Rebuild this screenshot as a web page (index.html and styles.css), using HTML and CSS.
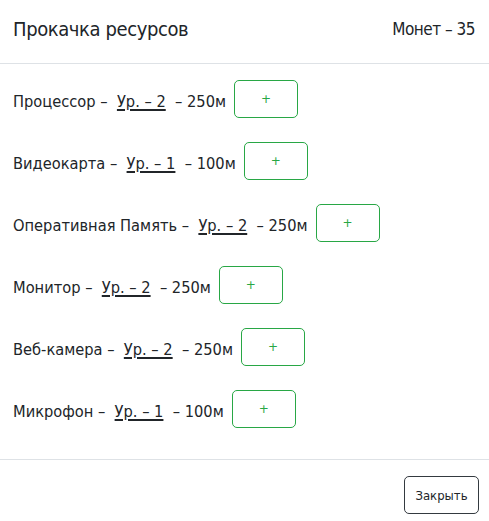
FILE: index.html
```html
<!DOCTYPE html>
<html lang="ru">
<head>
<meta charset="utf-8">
<link rel="stylesheet" href="styles.css">
</head>
<body>
<div class="modal">
  <div class="modal-header">
    <h5 class="title">Прокачка ресурсов</h5>
    <span class="coins">Монет – 35</span>
  </div>
  <div class="modal-body">
    <div class="row"><span>Процессор –&nbsp; <u>Ур. – 2</u> &nbsp;– 250м</span><button class="btn-plus">+</button></div>
    <div class="row"><span>Видеокарта –&nbsp; <u>Ур. – 1</u> &nbsp;– 100м</span><button class="btn-plus">+</button></div>
    <div class="row"><span>Оперативная Память –&nbsp; <u>Ур. – 2</u> &nbsp;– 250м</span><button class="btn-plus">+</button></div>
    <div class="row"><span>Монитор –&nbsp; <u>Ур. – 2</u> &nbsp;– 250м</span><button class="btn-plus">+</button></div>
    <div class="row"><span>Веб-камера –&nbsp; <u>Ур. – 2</u> &nbsp;– 250м</span><button class="btn-plus">+</button></div>
    <div class="row"><span>Микрофон –&nbsp; <u>Ур. – 1</u> &nbsp;– 100м</span><button class="btn-plus">+</button></div>
  </div>
  <div class="modal-footer">
    <button class="btn-close">Закрыть</button>
  </div>
</div>
</body>
</html>
```
FILE: styles.css
```css
* { box-sizing: border-box; }
html, body { margin: 0; padding: 0; background: #fff; }
body {
  font-family: "DejaVu Sans Condensed", "DejaVu Sans", sans-serif;
  color: #212529;
  font-size: 16px;
}
.modal { width: 489px; }
.modal-header {
  display: flex;
  justify-content: space-between;
  align-items: center;
  padding: 10px 16px 16px 13px;
  height: 64px;
  border-bottom: 1px solid #dee2e6;
}
.title { margin: 0; font-size: 20px; font-weight: normal; letter-spacing: -0.4px; }
.coins { font-size: 17px; letter-spacing: -0.5px; margin-right: -2px; }
.modal-body {
  padding: 16px 13px 31px;
  display: flex;
  flex-direction: column;
  gap: 24px;
}
.row {
  display: flex;
  align-items: center;
  font-size: 16.3px;
  padding-top: 2px;
}
.row span { margin-top: 2px; }
.row u { text-decoration-thickness: 2px; text-underline-offset: 2px; }
.btn-plus {
  margin-left: 8px;
  margin-top: -2px;
  width: 64px;
  height: 38px;
  border: 1px solid #28a745;
  border-radius: 5px;
  background: #fff;
  color: #28a745;
  font-family: "DejaVu Sans", sans-serif;
  font-size: 12px;
  padding: 0;
}
.modal-footer {
  border-top: 1px solid #dee2e6;
  display: flex;
  justify-content: flex-end;
  padding: 16px 10px 0 0;
  height: 62px;
}
.btn-close {
  width: 75px;
  height: 38px;
  border: 1px solid #343a40;
  border-radius: 5px;
  background: #fff;
  color: #212529;
  font-family: "DejaVu Sans Condensed", sans-serif;
  font-size: 13px;
  padding: 0;
}
```
